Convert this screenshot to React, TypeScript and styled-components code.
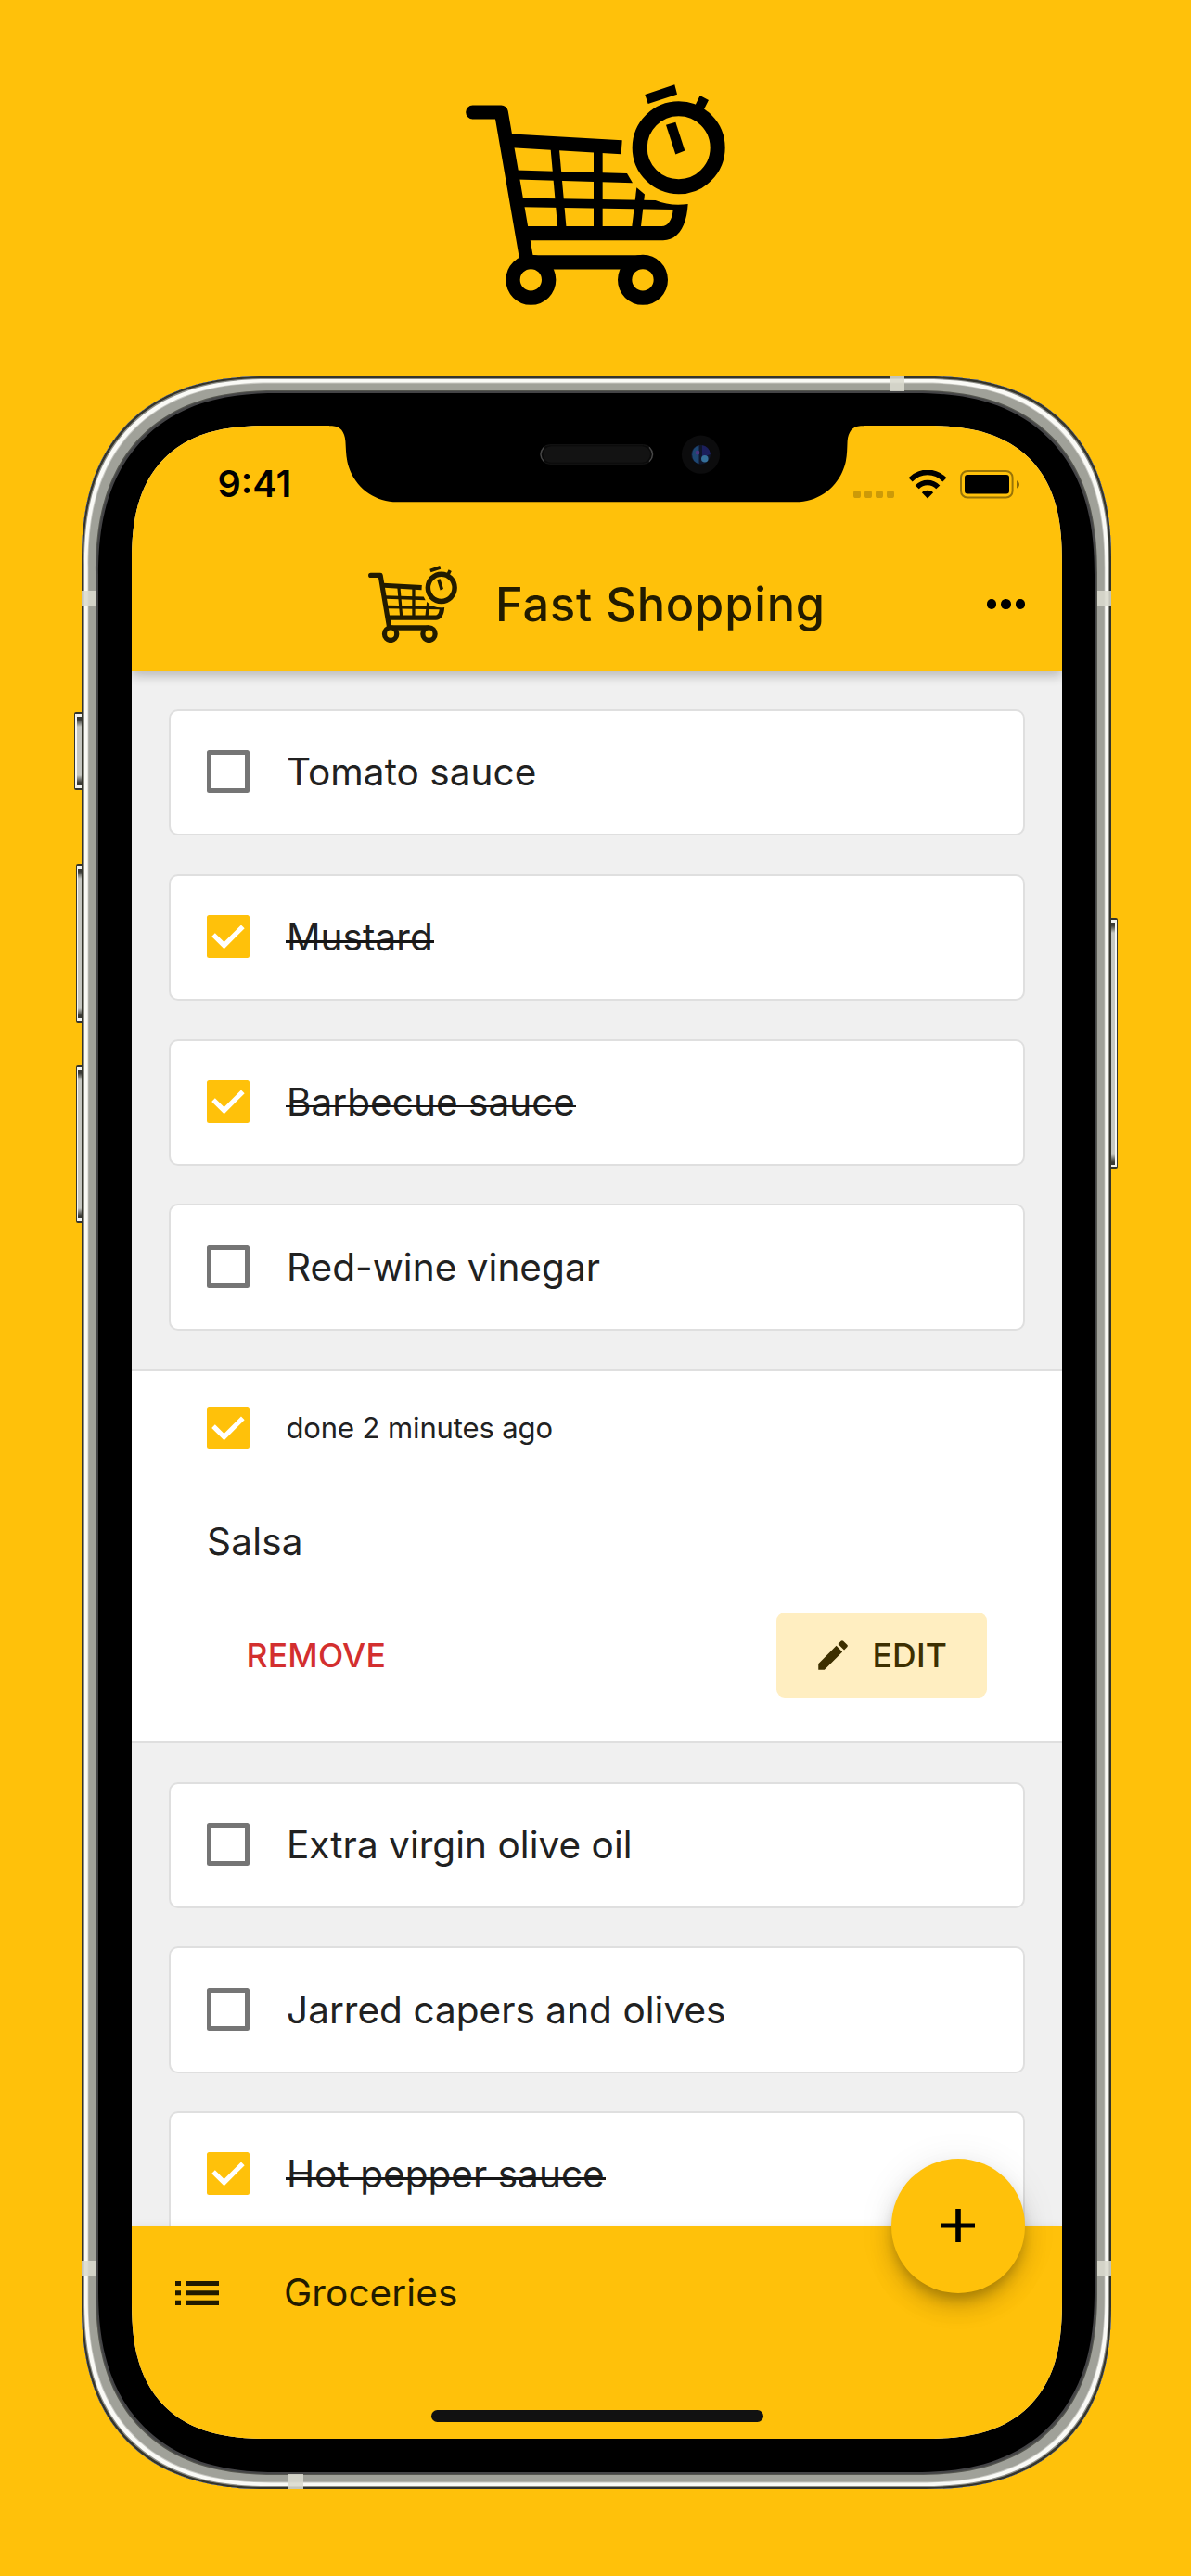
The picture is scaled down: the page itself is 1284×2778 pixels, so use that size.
import React from "react";
import styled, { createGlobalStyle } from "styled-components";

const AMBER = "#ffc10a";
const INK = "#221b00";
const FONT = `Inter, "Liberation Sans", sans-serif`;

const GlobalStyle = createGlobalStyle`
  * { box-sizing: border-box; }
  body { margin: 0; background: ${AMBER}; font-family: ${FONT}; }
`;

const Page = styled.main`
  width: 1284px;
  height: 2778px;
  overflow: hidden;
  display: flex;
  flex-direction: column;
  align-items: center;
  background: ${AMBER};
`;

const Hero = styled.header`
  height: 406px;
  padding-top: 91px;
  display: flex;
  justify-content: center;
  align-items: flex-start;
`;

const LogoSvg = styled.svg<{ $w: number; $h: number }>`
  width: ${(p) => p.$w}px;
  height: ${(p) => p.$h}px;
  display: block;
  flex: none;
`;

const Phone = styled.div`
  position: relative;
  width: 1110px;
  height: 2278px;
  margin-left: 2px;
  padding: 53.3px 53.5px 53.7px;
  flex: none;
`;

const Casing = styled.div`
  position: absolute;
  inset: 0;
  background: #000;
  border-radius: 176px;
  box-shadow:
    inset 0 0 0 2px #35352c,
    inset 0 0 0 3px #8f8f89,
    inset 0 0 0 6.6px #fafaf6,
    inset 0 0 0 7.4px #c9c9c3,
    inset 0 0 0 15px #a0a199,
    inset 0 0 0 16px #55564f,
    inset 0 0 0 18px #444446;
  @supports (corner-shape: superellipse(1.26)) {
    border-radius: 200px;
    corner-shape: superellipse(1.26);
  }
`;

const SideKey = styled.div<{ $side: "left" | "right"; $top: number; $h: number; $w: number }>`
  position: absolute;
  ${(p) => p.$side}: ${(p) => -p.$w}px;
  top: ${(p) => p.$top}px;
  width: ${(p) => p.$w + 2}px;
  height: ${(p) => p.$h}px;
  border: 1px solid #34342c;
  border-width: 2px 1px;
  border-radius: 2px;
  background:
    linear-gradient(to bottom, #f2f2ee 0 3px, transparent 3px calc(100% - 3px), #f2f2ee calc(100% - 3px)),
    linear-gradient(to ${(p) => p.$side}, transparent 0 78%, #f7f7f4 78%),
    linear-gradient(to bottom, #3a3a35 0 6px, #c6c7c1 14px calc(100% - 14px), #3a3a35 calc(100% - 6px));
`;

const Band = styled.div<{ $x: number; $y: number }>`
  position: absolute;
  left: ${(p) => p.$x}px;
  top: ${(p) => p.$y}px;
  width: 15.6px;
  height: 15.6px;
  background: rgba(218, 218, 206, 0.88);
`;

const Screen = styled.div`
  position: relative;
  width: 1003px;
  height: 2171px;
  overflow: hidden;
  display: flex;
  flex-direction: column;
  background: #f0f0f0;
  border-radius: 121px;
  @supports (corner-shape: superellipse(1.37)) {
    border-radius: 150px;
    corner-shape: superellipse(1.37);
  }
`;

const TopArea = styled.div`
  position: relative;
  z-index: 2;
  flex: none;
  height: 264.4px;
  background: ${AMBER};
  box-shadow: 0 5px 11px rgba(0, 0, 0, 0.15), 0 2px 14px rgba(0, 0, 0, 0.12);
`;

const StatusBar = styled.div`
  height: 119px;
  padding: 7px 45px 0 93px;
  display: flex;
  align-items: center;
  justify-content: space-between;
`;

const Clock = styled.span`
  font-size: 39.5px;
  font-weight: 600;
  line-height: 48px;
  color: #000;
`;

const Indicators = styled.div`
  display: flex;
  align-items: center;
`;

const Signal = styled.div`
  display: flex;
  gap: 4px;
  margin: 22px 15px 0 0;
`;

const SignalDot = styled.i`
  width: 8px;
  height: 8px;
  border-radius: 2.6px;
  background: rgba(0, 0, 0, 0.2);
`;

const BatterySlot = styled.div`
  display: flex;
  margin-left: 14px;
`;

const AppBar = styled.div`
  height: 145.4px;
  padding: 1.5px 39.5px 0 0;
  display: grid;
  grid-template-columns: 1fr auto 1fr;
  align-items: center;
`;

const Brand = styled.div`
  grid-column: 2;
  display: flex;
  align-items: center;
  gap: 41.5px;
  margin-left: 40px;
`;

const Title = styled.h1`
  margin: 0;
  font-size: 50.5px;
  font-weight: 500;
  line-height: 60px;
  letter-spacing: 0.8px;
  white-space: nowrap;
  color: ${INK};
`;

const MoreDots = styled.button`
  grid-column: 3;
  justify-self: end;
  display: flex;
  gap: 5px;
  padding: 0;
  border: 0;
  background: none;
`;

const MoreDot = styled.i`
  width: 10.5px;
  height: 10.5px;
  border-radius: 50%;
  background: #000;
`;

const List = styled.section`
  flex: 1;
  min-height: 0;
  overflow: hidden;
  padding-top: 41.4px;
`;

const Card = styled.div`
  height: 136.4px;
  margin: 0 39.5px 41.4px 40.7px;
  padding-left: 38.5px;
  display: flex;
  align-items: center;
  background: #fff;
  border: 2px solid #dfdfdf;
  border-radius: 10px;
`;

const Box = styled.span<{ $checked: boolean }>`
  width: 46px;
  height: 46px;
  flex: none;
  margin-top: -2px;
  display: flex;
  border-radius: 2.5px;
  border: ${(p) => (p.$checked ? "0" : "5px solid #757575")};
  background: ${(p) => (p.$checked ? AMBER : "transparent")};
`;

const Label = styled.span<{ $done: boolean }>`
  position: relative;
  margin-left: 39.3px;
  padding: 0 1px;
  font-size: 40.5px;
  line-height: 50px;
  letter-spacing: 0.04px;
  color: #212121;
  white-space: nowrap;
  &::after {
    content: "";
    display: ${(p) => (p.$done ? "block" : "none")};
    position: absolute;
    left: 0;
    right: 0;
    top: 28px;
    height: 2.6px;
    background: #161616;
  }
`;

const Expanded = styled.article`
  height: 404px;
  margin-bottom: 41.4px;
  padding: 39px 80.5px 0 81.5px;
  background: #fff;
  border: solid #dfdfdf;
  border-width: 2px 0;
`;

const DoneRow = styled.div`
  height: 46px;
  display: flex;
  align-items: center;
  & > ${Box} { margin-top: 0; }
`;

const DoneText = styled.span`
  margin-left: 39.5px;
  font-size: 31px;
  line-height: 40px;
  letter-spacing: -0.12px;
  color: #212121;
  white-space: nowrap;
`;

const ItemName = styled.div`
  margin-top: 75px;
  font-size: 40.5px;
  line-height: 50px;
  letter-spacing: 0.2px;
  color: #212121;
`;

const Actions = styled.div`
  margin-top: 51px;
  height: 92px;
  display: flex;
  justify-content: space-between;
`;

const ActionButton = styled.button<{ $tone: "danger" | "soft" }>`
  width: ${(p) => (p.$tone === "soft" ? "227px" : "auto")};
  height: 92px;
  padding: 0 0 0 ${(p) => (p.$tone === "soft" ? 41 : 42.5)}px;
  display: flex;
  align-items: center;
  border: 0;
  border-radius: 9px;
  font-family: ${FONT};
  font-size: 35.5px;
  font-weight: 500;
  letter-spacing: 0.2px;
  color: ${(p) => (p.$tone === "soft" ? "#3d2f00" : "#d32f2f")};
  background: ${(p) => (p.$tone === "soft" ? "#ffeec1" : "transparent")};
`;

const PencilSvg = styled.svg`
  width: 42px;
  height: 42px;
  margin: 0 21.5px 0 -1px;
  flex: none;
`;

const BottomBar = styled.footer`
  position: relative;
  z-index: 2;
  flex: none;
  height: 229.6px;
  display: flex;
  align-items: flex-start;
  padding: 47px 0 0 47.5px;
  background: ${AMBER};
  box-shadow: 0 -1px 9px rgba(0, 0, 0, 0.06);
`;

const ListSvg = styled.svg`
  width: 47px;
  height: 26px;
  margin-top: 12px;
  display: block;
`;

const ListName = styled.span`
  margin-left: 70px;
  font-size: 40.5px;
  line-height: 50px;
  letter-spacing: 0.1px;
  color: ${INK};
`;

const Fab = styled.button`
  position: absolute;
  right: 39.5px;
  top: -72.5px;
  width: 144.5px;
  height: 144.5px;
  padding: 0;
  border: 0;
  border-radius: 50%;
  display: grid;
  place-items: center;
  background: ${AMBER};
  box-shadow: 0 9px 13px -3px rgba(0, 0, 0, 0.22), 0 16px 27px rgba(0, 0, 0, 0.14), 0 3px 40px rgba(0, 0, 0, 0.08);
`;

const HomeIndicator = styled.div`
  position: absolute;
  left: 323.5px;
  bottom: 18.3px;
  width: 358px;
  height: 13px;
  border-radius: 7px;
  background: #111;
`;

const NotchSvg = styled.svg`
  position: absolute;
  z-index: 3;
  left: 213.5px;
  top: -1px;
  width: 576px;
  height: 86px;
`;

function CartLogo({ w, h, color }: { w: number; h: number; color: string }) {
  return (
    <LogoSvg $w={w} $h={h} viewBox="66 62 840 713" preserveAspectRatio="none" fill={color} stroke="none">
      <path d="M89 152H181L265 640" fill="none" stroke={color} strokeWidth="45" strokeLinecap="round" strokeLinejoin="round" />
      <path d="M205 222L572 243L569 288L215 267Z" />
      <path d="M228 340L588 350L606 381L232 370Z" />
      <path d="M240 430L680 437Q728 457 785 449C781 520 753 567 705 567H262V521H700C721 521 734 500 737 467L250 459Z" />
      <path d="M340 262H368L392 530H364Z" />
      <path d="M480 275H509V530H480Z" />
      <path d="M619 396L645 418L632 530H603Z" />
      <circle cx="755" cy="267" r="126" fill="none" stroke={color} strokeWidth="48" />
      <path d="M646 95L742 63L750 94L656 125Z" />
      <path d="M824 98L852 113L834 148L806 134Z" />
      <path d="M714 193L745 184L775 277L745 289Z" />
      <path d="M262 615H639V661H262Z" />
      <circle cx="277" cy="695" r="58" fill={AMBER} stroke={color} strokeWidth="46" />
      <circle cx="639" cy="695" r="58" fill={AMBER} stroke={color} strokeWidth="46" />
    </LogoSvg>
  );
}

function Checkbox({ checked }: { checked: boolean }) {
  return (
    <Box $checked={checked}>
      {checked && (
        <svg width="46" height="46" viewBox="0 0 46 46">
          <path d="M7 21.2L18.6 32.6L38.8 12.3" fill="none" stroke="#fff" strokeWidth="5.2" />
        </svg>
      )}
    </Box>
  );
}

function ShoppingItem({ name, done = false }: { name: string; done?: boolean }) {
  return (
    <Card>
      <Checkbox checked={done} />
      <Label $done={done}>{name}</Label>
    </Card>
  );
}

function WifiIcon() {
  return (
    <svg width="42" height="31" viewBox="0 0 42 31">
      <path d="M2.6 10.4C13 -0.2 29 -0.2 39.4 10.4" fill="none" stroke="#000" strokeWidth="5.8" />
      <path d="M9.7 18.4C16 11.8 26 11.8 32.3 18.4" fill="none" stroke="#000" strokeWidth="5.6" />
      <path d="M14.9 24.2C18 21 24 21 27.1 24.2L21 30.4Z" />
    </svg>
  );
}

function BatteryIcon() {
  return (
    <svg width="65" height="31" viewBox="0 0 65 31">
      <rect x="1" y="1" width="55.6" height="28.6" rx="7" fill="none" stroke="#000" strokeOpacity="0.4" strokeWidth="2" />
      <rect x="5" y="5" width="48" height="20.4" rx="3" />
      <path d="M61 11.2C65 13 65 18 61 19.6Z" fillOpacity="0.45" />
    </svg>
  );
}

function Notch() {
  return (
    <NotchSvg viewBox="355 458.3 576 86">
      <path d="M355 458H931V459.6H928C919 460 914.5 466 913.6 476C913.2 484 913.4 490 911.8 498C906 524 884 541.6 858 541.6H428C402 541.6 380 524 374.4 498C372.8 490 373 484 372.4 476C371.6 466 367 460 358 459.6H355Z" />
      <rect x="582.5" y="480" width="121.5" height="20.6" rx="10.3" fill="#0a0a0a" stroke="#161616" strokeWidth="1" />
      <rect x="585.5" y="481.5" width="115.5" height="17.6" rx="8.8" fill="#131313" />
      <path d="M586.5 482.5Q579.5 490.3 586.5 498M700 482.5Q707 490.3 700 498" fill="none" stroke="#484848" strokeWidth="1.3" />
      <circle cx="755.5" cy="490.5" r="20.6" fill="#0c0c0d" />
      <circle cx="755.5" cy="490.5" r="10.5" fill="#10162b" />
      <path d="M753.5 480.5A10.5 10.5 0 0 0 753.5 500.5Z" fill="#1d4672" />
      <path d="M757 480.5A10.5 10.5 0 0 1 766 490L757 494Z" fill="#1c1f5c" />
      <circle cx="752" cy="488.5" r="2.4" fill="#4a3580" />
      <circle cx="759.8" cy="495" r="3.8" fill="#35709a" />
    </NotchSvg>
  );
}

export default function App() {
  return (
    <Page>
      <GlobalStyle />
      <Hero>
        <CartLogo w={280} h={237.5} color="#000" />
      </Hero>
      <Phone>
        <SideKey $side="left" $top={362} $h={84} $w={8.5} />
        <SideKey $side="left" $top={525.5} $h={171} $w={6.5} />
        <SideKey $side="left" $top={743} $h={170} $w={6.5} />
        <SideKey $side="right" $top={584} $h={271} $w={7} />
        <Casing />
        <Band $x={0} $y={231} />
        <Band $x={1094.8} $y={231} />
        <Band $x={871} $y={0} />
        <Band $x={0} $y={2032} />
        <Band $x={1094.8} $y={2032} />
        <Band $x={223} $y={2262.4} />
        <Screen>
          <Notch />
          <TopArea>
            <StatusBar>
              <Clock>9:41</Clock>
              <Indicators>
                <Signal>
                  <SignalDot />
                  <SignalDot />
                  <SignalDot />
                  <SignalDot />
                </Signal>
                <WifiIcon />
                <BatterySlot>
                  <BatteryIcon />
                </BatterySlot>
              </Indicators>
            </StatusBar>
            <AppBar>
              <Brand>
                <CartLogo w={96} h={83} color={INK} />
                <Title>Fast Shopping</Title>
              </Brand>
              <MoreDots aria-label="More">
                <MoreDot />
                <MoreDot />
                <MoreDot />
              </MoreDots>
            </AppBar>
          </TopArea>
          <List>
            <ShoppingItem name="Tomato sauce" />
            <ShoppingItem name="Mustard" done />
            <ShoppingItem name="Barbecue sauce" done />
            <ShoppingItem name="Red-wine vinegar" />
            <Expanded>
              <DoneRow>
                <Checkbox checked />
                <DoneText>done 2 minutes ago</DoneText>
              </DoneRow>
              <ItemName>Salsa</ItemName>
              <Actions>
                <ActionButton $tone="danger">REMOVE</ActionButton>
                <ActionButton $tone="soft">
                  <PencilSvg viewBox="0 0 24 24" fill="currentColor">
                    <path d="M3 17.25V21h3.75L17.81 9.94l-3.75-3.75L3 17.25zM20.71 7.04a1 1 0 0 0 0-1.41l-2.34-2.34a1 1 0 0 0-1.41 0l-1.83 1.83 3.75 3.75 1.83-1.83z" />
                  </PencilSvg>
                  EDIT
                </ActionButton>
              </Actions>
            </Expanded>
            <ShoppingItem name="Extra virgin olive oil" />
            <ShoppingItem name="Jarred capers and olives" />
            <ShoppingItem name="Hot pepper sauce" done />
          </List>
          <BottomBar>
            <ListSvg viewBox="0 0 47 26" fill={INK}>
              <path d="M0 0H6V5H0ZM0 10.3H6V15.3H0ZM0 20.7H6V26H0ZM11 0H47V5H11ZM11 10.3H47V15.3H11ZM11 20.7H47V26H11Z" />
            </ListSvg>
            <ListName>Groceries</ListName>
            <Fab aria-label="Add">
              <svg width="36" height="36" viewBox="0 0 36 36">
                <path d="M15.2 0H20.8V15.4H36V20.6H20.8V36H15.2V20.6H0V15.4H15.2Z" />
              </svg>
            </Fab>
            <HomeIndicator />
          </BottomBar>
        </Screen>
      </Phone>
    </Page>
  );
}
